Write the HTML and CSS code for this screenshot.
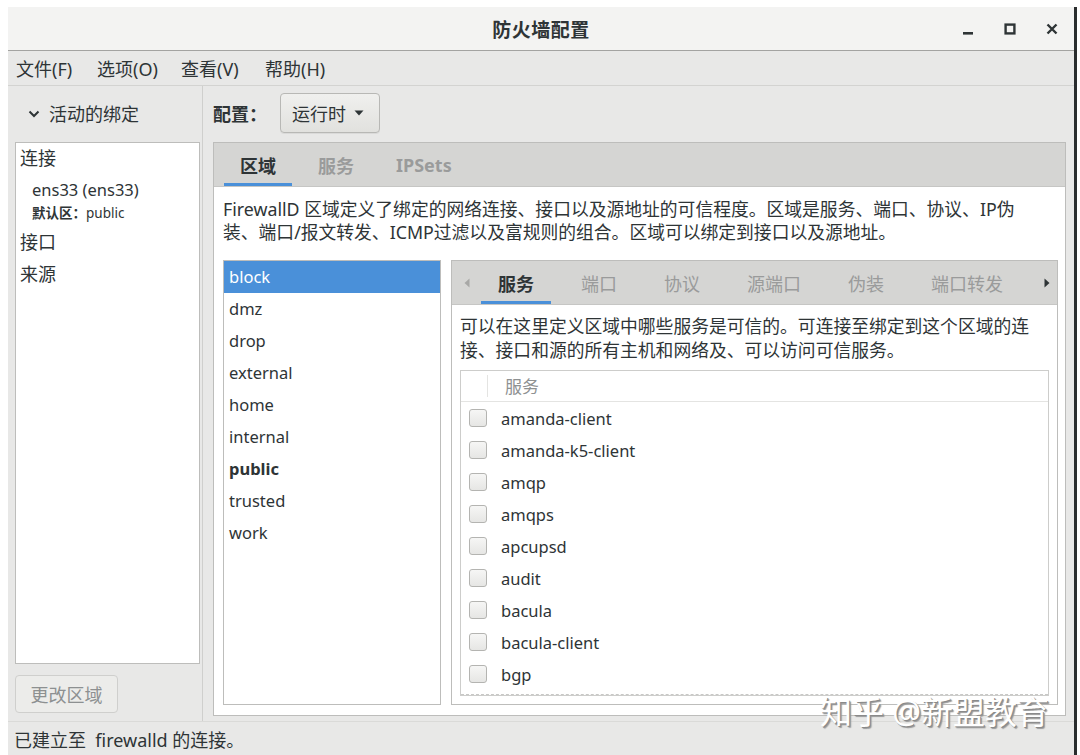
FILE: index.html
```html
<!DOCTYPE html>
<html lang="zh-CN">
<head>
<meta charset="utf-8">
<title>防火墙配置</title>
<link rel="stylesheet" href="styles.css">
</head>
<body>
<div class="window">
  <div class="titlebar">
    <div class="tb-side"></div>
    <div class="tb-title">防火墙配置</div>
    <div class="tb-side tb-controls">
      <span class="ctl"><svg width="12" height="12" viewBox="0 0 12 12"><rect x="1" y="9" width="10" height="2.6" fill="#2e3436"/></svg></span>
      <span class="ctl"><svg width="12" height="12" viewBox="0 0 12 12"><rect x="1.6" y="1.6" width="8.8" height="8.8" fill="none" stroke="#2e3436" stroke-width="2.4"/></svg></span>
      <span class="ctl"><svg width="12" height="12" viewBox="0 0 12 12"><path d="M1.5 1.5 L10.5 10.5 M10.5 1.5 L1.5 10.5" stroke="#2e3436" stroke-width="2.4" fill="none"/></svg></span>
    </div>
  </div>
  <div class="menubar">
    <span class="menu m1">文件(F)</span>
    <span class="menu m2">选项(O)</span>
    <span class="menu m3">查看(V)</span>
    <span class="menu m4">帮助(H)</span>
  </div>
  <div class="main">
    <div class="leftcol">
      <div class="lhead">
        <svg class="chev" width="12" height="8" viewBox="0 0 12 8"><path d="M1.5 1.5 L6 6 L10.5 1.5" stroke="#2e3436" stroke-width="2" fill="none"/></svg>
        <span>活动的绑定</span>
      </div>
      <div class="lbox">
        <div class="lrow">连接</div>
        <div class="lconn">
          <div class="lconn-name">ens33 (ens33)</div>
          <div class="lconn-zone"><b>默认区：</b>public</div>
        </div>
        <div class="lrow2">接口</div>
        <div class="lrow2">来源</div>
      </div>
      <div class="lbtn-row"><span class="btn-disabled">更改区域</span></div>
    </div>
    <div class="sep"></div>
    <div class="rightcol">
      <div class="cfgrow">
        <span class="cfg-label">配置：</span>
        <span class="combo">运行时<svg class="caret" width="10" height="6" viewBox="0 0 10 6"><path d="M0.5 0.5 L9.5 0.5 L5 5.5 Z" fill="#2e3436"/></svg></span>
      </div>
      <div class="notebook">
        <div class="tabs">
          <span class="tab active">区域</span>
          <span class="tab">服务</span>
          <span class="tab">IPSets</span>
        </div>
        <div class="nb-content">
          <p class="desc">FirewallD 区域定义了绑定的网络连接、接口以及源地址的可信程度。区域是服务、端口、协议、IP伪<br>装、端口/报文转发、ICMP过滤以及富规则的组合。区域可以绑定到接口以及源地址。</p>
          <div class="zone-area">
            <div class="zonelist">
              <div class="zone selected">block</div>
              <div class="zone">dmz</div>
              <div class="zone">drop</div>
              <div class="zone">external</div>
              <div class="zone">home</div>
              <div class="zone">internal</div>
              <div class="zone default">public</div>
              <div class="zone">trusted</div>
              <div class="zone">work</div>
            </div>
            <div class="inner-nb">
              <div class="itabs">
                <span class="arrow arrow-l"><svg width="6" height="10" viewBox="0 0 6 10"><path d="M5.5 0.5 L5.5 9.5 L0.5 5 Z" fill="#a8a8a6"/></svg></span>
                <span class="itab active">服务</span>
                <span class="itab">端口</span>
                <span class="itab">协议</span>
                <span class="itab">源端口</span>
                <span class="itab">伪装</span>
                <span class="itab">端口转发</span>
                <span class="arrow arrow-r"><svg width="6" height="10" viewBox="0 0 6 10"><path d="M0.5 0.5 L0.5 9.5 L5.5 5 Z" fill="#2e3436"/></svg></span>
              </div>
              <div class="inb-content">
                <p class="idesc">可以在这里定义区域中哪些服务是可信的。可连接至绑定到这个区域的连<br>接、接口和源的所有主机和网络及、可以访问可信服务。</p>
                <div class="tree">
                  <div class="tree-head">
                    <span class="th-check"></span>
                    <span class="th-name">服务</span>
                  </div>
                  <div class="tree-body">
                    <div class="trow"><span class="cb"></span><span>amanda-client</span></div>
                    <div class="trow"><span class="cb"></span><span>amanda-k5-client</span></div>
                    <div class="trow"><span class="cb"></span><span>amqp</span></div>
                    <div class="trow"><span class="cb"></span><span>amqps</span></div>
                    <div class="trow"><span class="cb"></span><span>apcupsd</span></div>
                    <div class="trow"><span class="cb"></span><span>audit</span></div>
                    <div class="trow"><span class="cb"></span><span>bacula</span></div>
                    <div class="trow"><span class="cb"></span><span>bacula-client</span></div>
                    <div class="trow"><span class="cb"></span><span>bgp</span></div>
                  </div>
                </div>
              </div>
            </div>
          </div>
        </div>
      </div>
    </div>
  </div>
  <div class="statusbar">已建立至&nbsp; firewalld 的连接。</div>
  <div class="watermark">知乎 @新盟教育</div>
</div>
</body>
</html>
```
FILE: styles.css
```css
* { box-sizing: border-box; }
html, body { margin: 0; padding: 0; background: #ffffff; }
body {
  font-family: "Noto Sans", "Noto Sans CJK SC", sans-serif;
  color: #2e3436;
  font-size: 18px;
}
.window {
  position: relative;
  margin: 7px 0 0 8px;
  width: 1069px;
  height: 748px;
  display: flex;
  flex-direction: column;
  background: #e8e8e7;
  border-right: 3px solid #2a2d2e;
  overflow: hidden;
}
.titlebar {
  height: 44px;
  flex: none;
  background: #f3f3f2;
  border-bottom: 1px solid #a3a3a1;
  display: grid;
  grid-template-columns: 1fr auto 1fr;
  align-items: center;
}
.tb-title { font-weight: bold; font-size: 19px; letter-spacing: 0.5px; }
.tb-controls { display: flex; justify-content: flex-end; padding-right: 1px; }
.ctl { width: 42px; height: 24px; display: flex; align-items: center; justify-content: center; }
.menubar {
  height: 35px;
  flex: none;
  border-bottom: 1px solid #d3d3d1;
  display: flex;
  align-items: center;
  padding-left: 8px;
  font-size: 18px;
}
.menu { white-space: nowrap; }
.m1 { width: 81px; }
.m2 { width: 84px; }
.m3 { width: 84px; }
.main { flex: 1; display: flex; min-height: 0; }
.leftcol { width: 194px; flex: none; display: flex; flex-direction: column; padding: 0 2px 0 7px; }
.lhead { height: 54px; flex: none; display: flex; align-items: center; padding-left: 13px; gap: 9px; font-size: 18px; margin-bottom: 2px; }
.chev { margin-top: 1px; }
.lbox {
  flex: 1;
  background: #ffffff;
  border: 1px solid #bdbdbb;
  padding: 0 0 0 4px;
}
.lrow { height: 30px; line-height: 30px; }
.lconn { padding: 4px 0 3px 12px; }
.lconn-name { height: 26px; line-height: 26px; font-size: 16.5px; }
.lconn-zone { height: 20px; line-height: 20px; font-size: 13.5px; }
.lconn-zone b { font-weight: bold; }
.lrow2 { height: 32px; line-height: 32px; }
.lbtn-row { height: 57px; flex: none; padding-top: 11px; }
.btn-disabled {
  display: inline-flex;
  align-items: center;
  justify-content: center;
  width: 103px;
  height: 38px;
  border: 1px solid #cfcfcd;
  border-radius: 4px;
  background: #ececea;
  color: #8d9091;
}
.sep { width: 1px; flex: none; background: #cfcfcd; }
.rightcol { flex: 1; display: flex; flex-direction: column; padding: 0 8px 5px 10px; min-width: 0; }
.cfgrow { height: 56px; flex: none; display: flex; align-items: center; padding-bottom: 3px; }
.cfg-label { font-weight: bold; width: 67px; }
.combo {
  display: inline-flex;
  align-items: center;
  gap: 8px;
  height: 40px;
  width: 100px;
  padding-left: 11px;
  border: 1px solid #b8b8b5;
  border-radius: 4px;
  background: linear-gradient(#f0f0ee, #e1e1de);
  box-shadow: 0 1px 0 rgba(0,0,0,0.06);
}
.caret { margin-top: 1px; }
.notebook {
  flex: 1;
  display: flex;
  flex-direction: column;
  border: 1px solid #bdbdbb;
  min-height: 0;
}
.tabs {
  height: 44px;
  flex: none;
  background: #d5d5d3;
  display: flex;
  align-items: stretch;
  padding-left: 10px;
  gap: 10px;
  border-bottom: 1px solid #c6c6c4;
}
.tab {
  padding: 0 16px;
  display: flex;
  align-items: center;
  font-weight: bold;
  color: #9a9b9b;
  border-bottom: 3px solid transparent;
  padding-top: 3px;
  white-space: nowrap;
}
.tab.active { color: #2e3436; border-bottom-color: #4a90d9; }
.nb-content { flex: 1; background: #ffffff; padding: 11px 7px 10px 9px; display: flex; flex-direction: column; min-height: 0; }
.desc { margin: 0; line-height: 23px; font-size: 17.8px; white-space: nowrap; }
.zone-area { flex: 1; display: flex; gap: 10px; margin-top: 16px; min-height: 0; }
.zonelist { width: 218px; flex: none; border: 1px solid #bdbdbb; background: #fff; }
.zone { height: 32px; line-height: 32px; padding-left: 5px; font-size: 16.5px; }
.zone.selected { background: #4a90d9; color: #ffffff; }
.zone.default { font-weight: bold; }
.inner-nb { flex: 1; display: flex; flex-direction: column; border: 1px solid #bdbdbb; min-width: 0; }
.itabs {
  height: 44px;
  flex: none;
  background: #d5d5d3;
  display: flex;
  align-items: stretch;
  gap: 13px;
  border-bottom: 1px solid #c6c6c4;
  overflow: hidden;
}
.arrow { flex: none; display: flex; align-items: center; justify-content: center; }
.arrow-l { width: 29px; margin-right: -13px; }
.arrow-r { width: 28px; margin-left: auto; }
.itab {
  flex: none;
  white-space: nowrap;
  padding: 3px 17px 0;
  display: flex;
  align-items: center;
  color: #9a9b9b;
  border-bottom: 3px solid transparent;
}
.itab.active { color: #2e3436; font-weight: bold; border-bottom-color: #4a90d9; }
.inb-content { flex: 1; background: #fff; padding: 9px 8px 8px 8px; display: flex; flex-direction: column; min-height: 0; }
.idesc { margin: 0; line-height: 24px; font-size: 17.8px; white-space: nowrap; }
.tree { flex: 1; margin-top: 8px; border: 1px solid #cdcdcb; display: flex; flex-direction: column; min-height: 0; overflow: hidden; }
.tree-head { height: 31px; flex: none; display: flex; border-bottom: 1px solid #e4e4e2; }
.th-check { width: 27px; border-right: 1px solid #e4e4e2; margin: 4px 0; }
.th-name { padding-left: 17px; line-height: 31px; color: #8e9192; font-size: 17px; }
.tree-body { flex: 1; border-bottom: 1px dashed #c8c8c6; }
.trow { height: 32px; display: flex; align-items: center; font-size: 16.5px; }
.cb {
  width: 18px;
  height: 18px;
  margin: 0 14px 0 8px;
  border: 1px solid #b4b4b1;
  border-radius: 3px;
  background: linear-gradient(#f6f6f5, #e6e6e4);
}
.statusbar {
  height: 34px;
  flex: none;
  border-top: 1px solid #dadad8;
  display: flex;
  align-items: center;
  padding-left: 6px;
  font-size: 18px;
}
.watermark {
  position: absolute;
  left: 812px;
  top: 680px;
  font-size: 32px;
  color: #ffffff;
  text-shadow: 1px 1px 0 #8a8a8a, 2px 2px 1px #9a9a9a;
  white-space: nowrap;
}
```
